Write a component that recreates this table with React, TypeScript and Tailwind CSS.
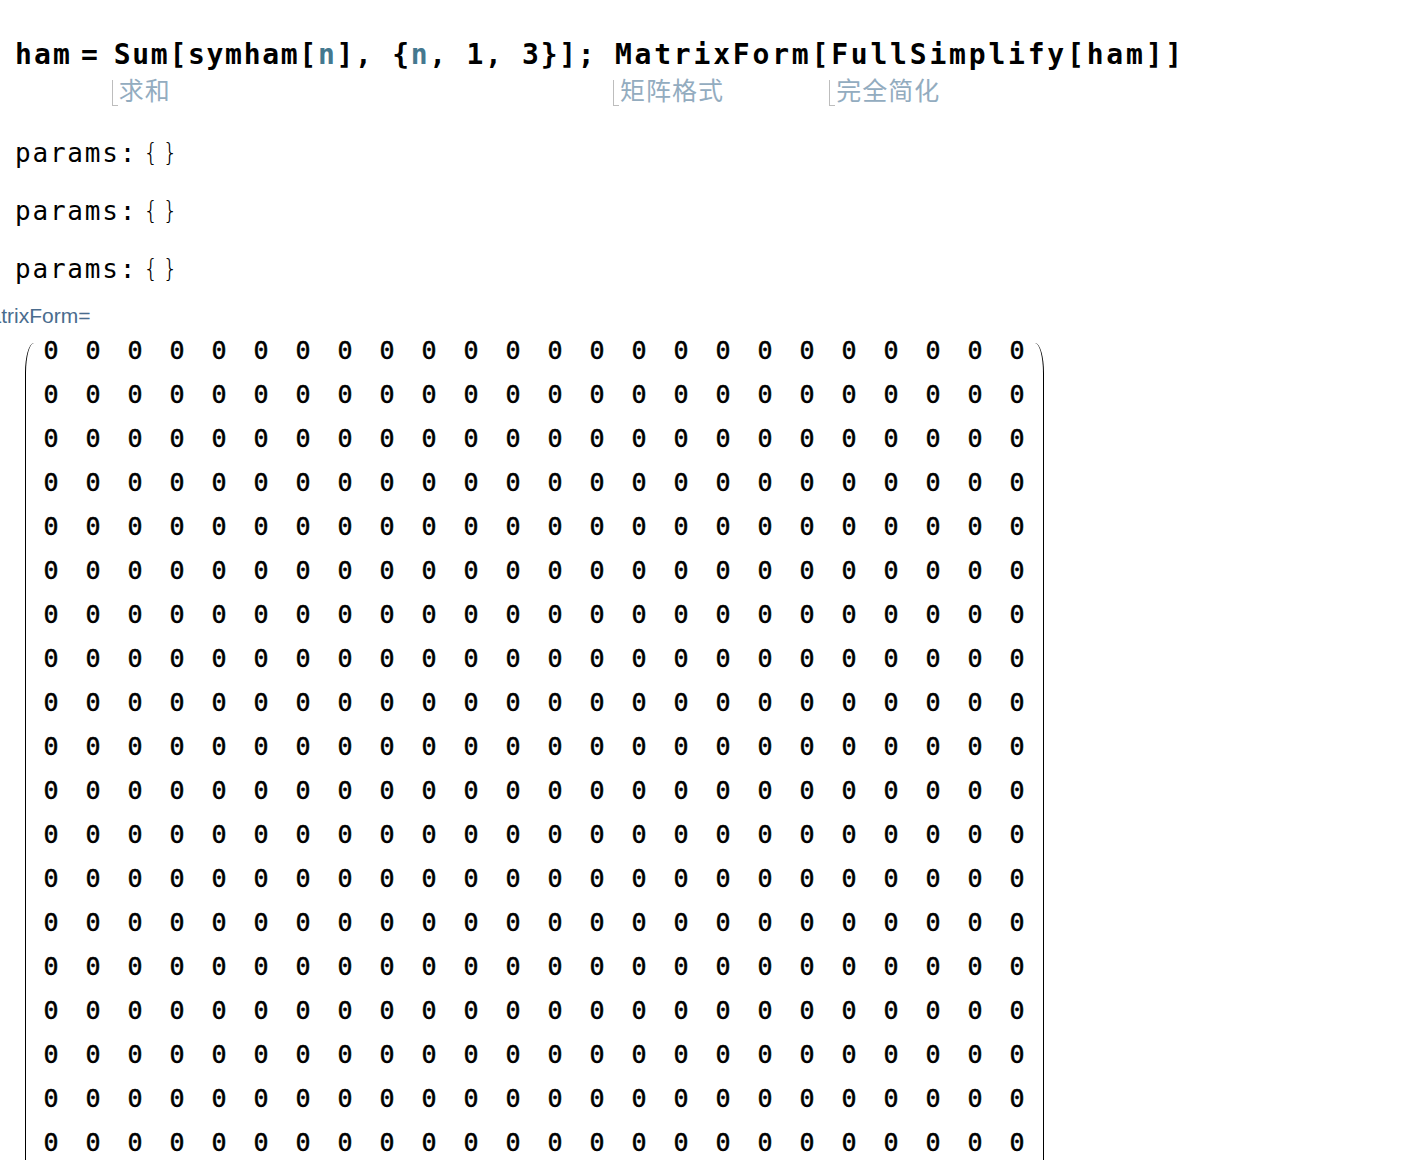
const mono = "font-['DejaVu_Sans_Mono','Liberation_Mono',monospace]";

const Note = ({ text }: { text: string }) => (
  <span className="pointer-events-none absolute -left-[2px] top-[37px] flex items-end whitespace-nowrap tracking-normal">
    <span className="mb-[-3px] mr-[1px] h-[26px] w-[6px] border-b-[1.5px] border-l-[1.5px] border-[#bdbdbd]" />
    <span className="font-['Noto_Sans_CJK_SC',sans-serif] text-[25px] font-normal leading-[28px] tracking-[1px] text-[#93acbf]">
      {text}
    </span>
  </span>
);

const Fn = ({ name, note }: { name: string; note: string }) => (
  <span className="relative">
    {name}
    <Note text={note} />
  </span>
);

const ROWS = 24;
const COLS = 24;

export default function App() {
  return (
    <div className="min-h-screen overflow-hidden bg-white text-black">
      <div
        className={`${mono} ml-[15px] mt-[40px] flex whitespace-pre text-[28px] font-bold leading-[30px]`}
      >
        <span className="tracking-[2.1px]">ham</span>
        <span className="ml-[9px] mr-[16px]">=</span>
        <span className="tracking-[1.7px]">
          <Fn name="Sum" note="求和" />
          [symham[<span className="text-[#44788f]">n</span>], {'{'}
          <span className="text-[#44788f]">n</span>, 1, 3{'}'}];{' '}
        </span>
        <span className="tracking-[2.8px]">
          <Fn name="MatrixForm" note="矩阵格式" />[
          <Fn name="FullSimplify" note="完全简化" />
          [ham]]
        </span>
      </div>

      <div className="mt-[54px] flex flex-col">
        {[0, 1, 2].map((i) => (
          <div key={i} className="ml-[15px] flex h-[58px] items-center">
            <span className={`${mono} text-[26px] tracking-[1.8px]`}>params:</span>
            <span className="ml-[6px] font-['DejaVu_Sans',sans-serif] text-[24px] font-extralight tracking-[4px]">
              {'{}'}
            </span>
          </div>
        ))}
      </div>

      <div className="ml-[-28px] mt-[8px] font-['Liberation_Sans',Arial,sans-serif] text-[21px] leading-[20px] text-[#4a6c8e]">
        MatrixForm=
      </div>

      <div className="mt-[1px] flex">
        <div className="ml-[25px] mt-[16px] mb-[16px] w-[9px] shrink-0 rounded-l-[9px_30px] border-l-[1.5px] border-black" />
        <div className="-ml-[4px] grid grid-cols-[repeat(24,42px)]">
          {Array.from({ length: ROWS * COLS }).map((_, i) => (
            <div
              key={i}
              className={`${mono} flex h-[44px] items-center justify-center pt-[2px] text-[25px] font-normal leading-none [-webkit-text-stroke:0.5px_black]`}
            >
              0
            </div>
          ))}
        </div>
        <div className="ml-[-3px] mt-[16px] mb-[16px] w-[9px] shrink-0 rounded-r-[9px_30px] border-r-[1.5px] border-black" />
      </div>
    </div>
  );
}
